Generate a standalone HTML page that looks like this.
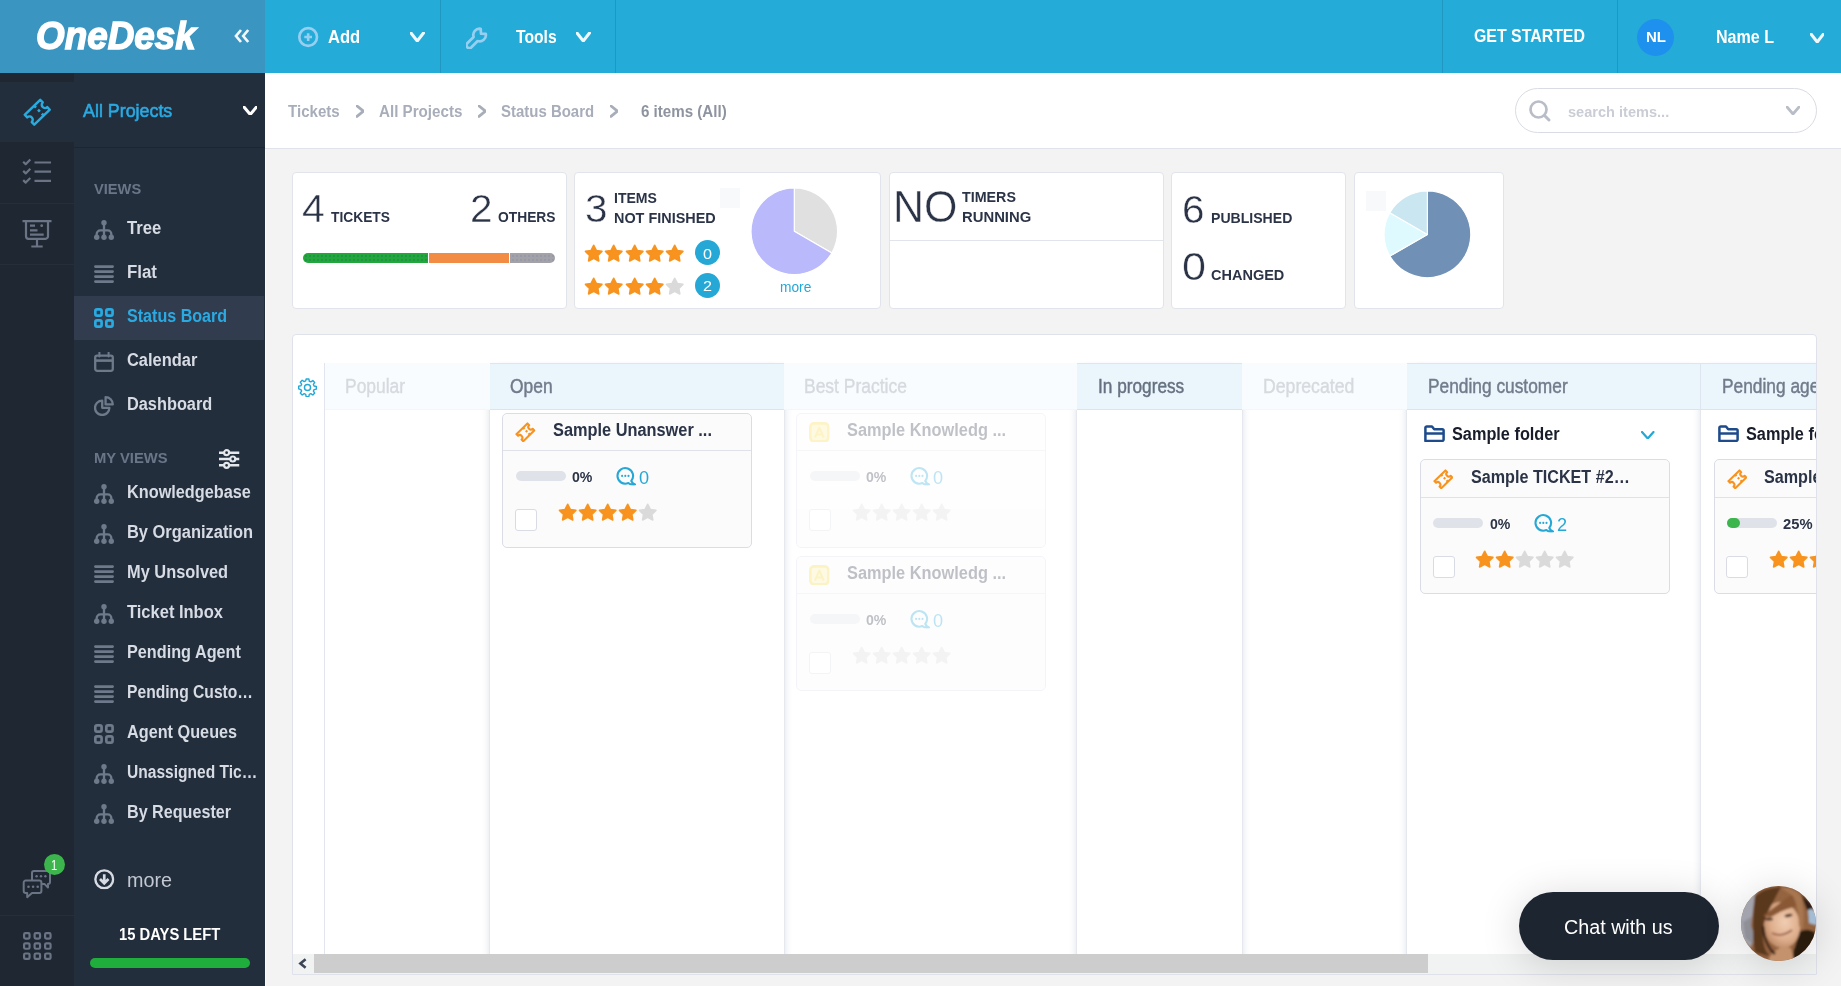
<!DOCTYPE html>
<html><head><meta charset="utf-8"><title>OneDesk</title>
<style>
*{box-sizing:border-box;margin:0;padding:0}
html,body{width:1841px;height:986px;overflow:hidden;background:#f3f3f3;font-family:"Liberation Sans",sans-serif}
.a{position:absolute}
.t{position:absolute;white-space:nowrap;transform-origin:0 0}
.card{position:absolute;background:#fff;border:1px solid #e2e4ec;border-radius:4px}
</style></head><body>

<svg width="0" height="0" style="position:absolute"><defs>
<symbol id="i-ticket" viewBox="-15 -15 30 30"><g transform="rotate(-44)" fill="none" stroke="currentColor" stroke-width="2.4" stroke-linejoin="round"><path d="M-10.6 -6.8H10.6V-3.2A3.2 3.2 0 0 0 10.6 3.2V6.8H-10.6V3.2A3.2 3.2 0 0 0 -10.6 -3.2Z"/><path d="M2.300 -6.800V-4.200M2.300 4.200V6.800M2.300 -1.300V1.300" stroke-width="2.600"/></g></symbol>
<symbol id="i-ticket-s" viewBox="-14.300 -14.300 28.600 28.600"><g transform="rotate(-44)" fill="none" stroke="currentColor" stroke-width="2.900" stroke-linejoin="round"><path d="M-10.600 -6.800H10.600V-3.500A3.500 3.500 0 0 0 10.600 3.500V6.800H-10.600V3.500A3.500 3.500 0 0 0 -10.600 -3.500Z"/><path d="M2.300 -6.800V-4M2.300 4V6.800M2.300 -1.400V1.400" stroke-width="3"/></g></symbol>
<symbol id="i-tree" viewBox="0 0 20 20"><g fill="currentColor"><circle cx="10" cy="2.7" r="2.7"/><circle cx="2.7" cy="17.3" r="2.7"/><circle cx="10" cy="17.3" r="2.7"/><circle cx="17.3" cy="17.3" r="2.7"/></g><path d="M10 3V17M2.7 16V14A3.6 3.6 0 0 1 6.3 10.400H13.700A3.6 3.6 0 0 1 17.3 14V16" fill="none" stroke="currentColor" stroke-width="2.300"/></symbol>
<symbol id="i-flat" viewBox="0 0 20 20"><path d="M1.4 2.6H18.6M1.4 7.6H18.6M1.4 12.6H18.6M1.4 17.6H18.6" stroke="currentColor" stroke-width="2.7" stroke-linecap="round"/></symbol>
<symbol id="i-grid" viewBox="0 0 20.200 20"><g fill="none" stroke="currentColor" stroke-width="2.700"><rect x="1.350" y="1.350" width="6.300" height="6.300" rx="1.700"/><rect x="12.450" y="1.350" width="6.300" height="6.300" rx="1.700"/><rect x="1.350" y="12.350" width="6.300" height="6.300" rx="1.700"/><rect x="12.450" y="12.350" width="6.300" height="6.300" rx="1.700"/></g></symbol>
<symbol id="i-cal" viewBox="0 0 20 20"><g fill="none" stroke="currentColor" stroke-width="2.300"><rect x="1.200" y="3.600" width="17.600" height="15.200" rx="2"/><path d="M1.200 8.600H18.800" stroke-width="2.600"/><path d="M5.400 0.300V4.600M14.600 0.300V4.600" stroke-linecap="round" stroke-width="2"/></g></symbol>
<symbol id="i-dash" viewBox="0 0 20 20"><g fill="none" stroke="currentColor" stroke-width="2.300" stroke-linejoin="round"><path d="M8.200 4.600A7.200 7.200 0 1 0 15.400 11.800H8.200Z"/><path d="M11.600 1.200V8.400H18.800A7.200 7.200 0 0 0 11.600 1.200Z"/></g></symbol>
<symbol id="i-sliders" viewBox="0 0 20.500 20"><g fill="none" stroke="currentColor" stroke-width="2.500"><path d="M0 3.700H20.500M0 10H20.500M0 16.300H20.500"/><circle cx="7.600" cy="3.700" r="2.500" fill="#232e3d" stroke-width="2.200"/><circle cx="13.800" cy="10" r="2.500" fill="#232e3d" stroke-width="2.200"/><circle cx="7.600" cy="16.300" r="2.500" fill="#232e3d" stroke-width="2.200"/></g></symbol>
<symbol id="i-down" viewBox="0 0 20.500 20.500"><g fill="none" stroke="currentColor" stroke-width="2.400"><circle cx="10.250" cy="10.250" r="8.900"/><path d="M10.250 5.200V14M6 10L10.250 14.300L14.500 10" stroke-width="2.700"/></g></symbol>
<symbol id="i-star" viewBox="0 0 20 19"><path d="M10.00 1.40L12.65 6.66L18.46 7.55L14.28 11.69L15.23 17.50L10.00 14.80L4.77 17.50L5.72 11.69L1.54 7.55L7.35 6.66Z" fill="currentColor" stroke="currentColor" stroke-width="1.700" stroke-linejoin="round"/></symbol>
<symbol id="i-chat" viewBox="0 0 20 18.500"><path d="M15.270 13.910A7.800 7.800 0 1 0 12.350 16.080C14 17.600 16.500 17.900 19 17.400C17.200 16.700 15.800 15.600 15.270 13.910Z" fill="none" stroke="currentColor" stroke-width="2.100" stroke-linejoin="round"/><g fill="currentColor"><circle cx="6.100" cy="8.900" r="1.050"/><circle cx="9.300" cy="8.900" r="1.050"/><circle cx="12.500" cy="8.900" r="1.050"/></g></symbol>
<symbol id="i-folder" viewBox="0 0 21 17.500"><g fill="none" stroke="currentColor" stroke-width="2.500" stroke-linejoin="round"><path d="M1.400 15.900V2.800A1.400 1.400 0 0 1 2.800 1.400H8L10.200 4.200H18.200A1.400 1.400 0 0 1 19.600 5.600V14.500A1.400 1.400 0 0 1 18.200 15.900Z"/><path d="M1.400 8.600H19.600"/></g></symbol>
<symbol id="i-gear" viewBox="0 0 20 20"><g fill="none" stroke="currentColor" stroke-width="1.5" stroke-linejoin="round"><circle cx="10" cy="10" r="3.2"/><path d="M8.6 1h2.8l.5 2.4 1.6.7 2.1-1.4 2 2-1.4 2.1.7 1.6 2.4.5v2.8l-2.4.5-.7 1.6 1.4 2.1-2 2-2.1-1.4-1.6.7-.5 2.4H8.6l-.5-2.4-1.6-.7-2.1 1.4-2-2 1.4-2.1-.7-1.6L.7 11.400V8.6l2.400-.5.7-1.6L2.400 4.400l2-2 2.100 1.400 1.600-.7z"/></g></symbol>
<symbol id="i-kb" viewBox="0 0 20 20"><g stroke="currentColor" stroke-linejoin="round"><rect x="1.300" y="1.300" width="17.400" height="17.400" rx="3.600" fill="#fbeea0" stroke-width="2.500"/><path d="M5.800 15L10 5.400L14.200 15M7.200 12H12.800" fill="none" stroke-width="2"/></g></symbol>
</defs></svg>
<div class="a" style="left:0px;top:0px;width:1841px;height:73px;background:#24abd8;"></div>
<div class="a" style="left:0px;top:0px;width:265px;height:73px;background:#3a95c0;"></div>
<div class="t" style="left:35.7px;top:13px;font-size:39.5px;line-height:44px;color:#fff;font-weight:bold;font-style:italic;transform:scaleX(0.9331);-webkit-text-stroke:1.5px #fff;">OneDesk</div>
<svg class="a" style="left:234px;top:29px" width="16" height="14" viewBox="0 0 16 14"><path d="M7 1L2 7l5 6M14.200 1L9.200 7l5 6" fill="none" stroke="#f2f8fc" stroke-width="2.700"/></svg>
<div class="a" style="left:440px;top:0px;width:1px;height:73px;background:#2097c2;"></div>
<div class="a" style="left:615px;top:0px;width:1px;height:73px;background:#2097c2;"></div>
<div class="a" style="left:1442px;top:0px;width:1px;height:73px;background:#2097c2;"></div>
<div class="a" style="left:1617px;top:0px;width:1px;height:73px;background:#2097c2;"></div>
<svg class="a" style="left:297px;top:26px" width="22" height="22" viewBox="0 0 22 22"><circle cx="11.150" cy="11.050" r="8.850" fill="none" stroke="#97cff0" stroke-width="2.700"/><path d="M11.150 7.200V14.900M7.300 11.050H15" stroke="#97cff0" stroke-width="2.600"/></svg>
<div class="t" style="left:328.3px;top:26px;font-size:19px;line-height:21px;color:#fff;font-weight:bold;transform:scaleX(0.8718);">Add</div>
<svg class="a" style="left:410px;top:32px" width="14.5" height="10"><path d="M1 1L7.25 9L13.5 1" fill="none" stroke="#f1f8fc" stroke-width="3" stroke-linecap="round" stroke-linejoin="round"/></svg>
<svg class="a" style="left:466.300px;top:26.500px" width="22" height="22" viewBox="0 0 22 22"><path d="M19.800 6.900L15 6.600L14.700 1.800A6.300 6.300 0 0 0 7.600 9.950L1.300 16.200A2.900 2.900 0 0 0 5.400 20.300L11.650 14A6.300 6.300 0 0 0 19.800 6.900Z" fill="none" stroke="#97cff0" stroke-width="2.700" stroke-linejoin="round"/></svg>
<div class="t" style="left:516.2px;top:26px;font-size:19px;line-height:21px;color:#fff;font-weight:bold;transform:scaleX(0.8243);">Tools</div>
<svg class="a" style="left:576px;top:32px" width="14.5" height="10"><path d="M1 1L7.25 9L13.5 1" fill="none" stroke="#f1f8fc" stroke-width="3" stroke-linecap="round" stroke-linejoin="round"/></svg>
<div class="t" style="left:1474.0px;top:26px;font-size:18.2px;line-height:20px;color:#fff;font-weight:bold;transform:scaleX(0.8736);">GET STARTED</div>
<div class="a" style="left:1636.5px;top:18.5px;width:37.5px;height:37.5px;background:#1e90ee;border-radius:50%"></div>
<div class="t" style="left:1645.5px;top:28px;font-size:15.5px;line-height:17px;color:#fff;font-weight:bold;transform:scaleX(0.9679);">NL</div>
<div class="t" style="left:1716.4px;top:26px;font-size:19px;line-height:21px;color:#fff;font-weight:bold;transform:scaleX(0.8465);">Name L</div>
<svg class="a" style="left:1809.5px;top:32.5px" width="14.5" height="10"><path d="M1 1L7.25 9L13.5 1" fill="none" stroke="#f1f8fc" stroke-width="3" stroke-linecap="round" stroke-linejoin="round"/></svg>
<div class="a" style="left:0px;top:73px;width:74px;height:913px;background:#1e2732;"></div>
<div class="a" style="left:74px;top:73px;width:191px;height:913px;background:#232e3d;"></div>
<div class="a" style="left:0px;top:82px;width:74px;height:60px;background:#232e3d;"></div>
<div class="a" style="left:74px;top:147px;width:191px;height:1px;background:#1c2531;"></div>
<svg class="a" style="left:21.5px;top:96.5px;color:#27ace0;" width="30.5" height="30.5"><use href="#i-ticket"/></svg>
<div class="t" style="left:83.3px;top:100px;font-size:19px;line-height:21px;color:#2aaae2;transform:scaleX(0.9397);-webkit-text-stroke:0.6px #2aaae2;">All Projects</div>
<svg class="a" style="left:242.5px;top:105.5px" width="14.5" height="9.5"><path d="M1 1L7.25 8.5L13.5 1" fill="none" stroke="#fff" stroke-width="3" stroke-linecap="round" stroke-linejoin="round"/></svg>
<svg class="a" style="left:21px;top:158px" width="31" height="28" viewBox="0 0 31 28"><g fill="none" stroke="#6a7484" stroke-width="2.200"><path d="M2.200 3.700L4.700 6.200L9.300 1.500M2.200 12.900L4.700 15.400L9.300 10.700M2.200 22.100L4.700 24.600L9.300 19.900" stroke-linejoin="round"/><path d="M13.500 4.500H30M13.500 13.700H30M13.500 22.900H30"/></g></svg>
<div class="a" style="left:0px;top:203px;width:74px;height:1px;background:#252f3c;"></div>
<svg class="a" style="left:22px;top:219px" width="30" height="29" viewBox="0 0 30 29"><g fill="none" stroke="#6a7484" stroke-width="2.200"><path d="M0.500 2.100H29.500M4 2.100V17.300A2.500 2.500 0 0 0 6.500 19.800H23.500A2.500 2.500 0 0 0 26 17.300V2.100M15 19.800V27.500M9.300 27.500H20.700M8 6.700H13M8 11.300H15.500M8 15.700H21.700"/></g><circle cx="19.700" cy="6.700" r="1.400" fill="#6a7484"/></svg>
<div class="a" style="left:0px;top:264px;width:74px;height:1px;background:#252f3c;"></div>
<div class="t" style="left:94.3px;top:180px;font-size:15.2px;line-height:17px;color:#6a7688;font-weight:bold;transform:scaleX(0.9635);">VIEWS</div>
<div class="a" style="left:74px;top:296px;width:190px;height:44px;background:#323c4f;"></div>
<svg class="a" style="left:94px;top:220px;color:#6e798a;" width="20" height="20"><use href="#i-tree"/></svg>
<div class="t" style="left:127.0px;top:217px;font-size:18.7px;line-height:21px;color:#d7dbe3;font-weight:bold;transform:scaleX(0.8916);">Tree</div>
<svg class="a" style="left:94px;top:264px;color:#6e798a;" width="20" height="20"><use href="#i-flat"/></svg>
<div class="t" style="left:127.0px;top:261px;font-size:18.7px;line-height:21px;color:#d7dbe3;font-weight:bold;transform:scaleX(0.9024);">Flat</div>
<svg class="a" style="left:94px;top:308px;color:#29abe2;" width="20" height="20"><use href="#i-grid"/></svg>
<div class="t" style="left:127.0px;top:305px;font-size:18.7px;line-height:21px;color:#2aaae2;font-weight:bold;transform:scaleX(0.8610);">Status Board</div>
<svg class="a" style="left:94px;top:352px;color:#6e798a;" width="20" height="20"><use href="#i-cal"/></svg>
<div class="t" style="left:127.0px;top:349px;font-size:18.7px;line-height:21px;color:#d7dbe3;font-weight:bold;transform:scaleX(0.8797);">Calendar</div>
<svg class="a" style="left:94px;top:396px;color:#6e798a;" width="20" height="20"><use href="#i-dash"/></svg>
<div class="t" style="left:127.0px;top:393px;font-size:18.7px;line-height:21px;color:#d7dbe3;font-weight:bold;transform:scaleX(0.8733);">Dashboard</div>
<div class="t" style="left:94.3px;top:449px;font-size:15.2px;line-height:17px;color:#6a7688;font-weight:bold;transform:scaleX(0.9731);">MY VIEWS</div>
<svg class="a" style="left:219px;top:449.2px;color:#e4e7ec;" width="20.5" height="20"><use href="#i-sliders"/></svg>
<svg class="a" style="left:94px;top:484px;color:#6e798a;" width="20" height="20"><use href="#i-tree"/></svg>
<div class="t" style="left:127.0px;top:481px;font-size:18.7px;line-height:21px;color:#d7dbe3;font-weight:bold;transform:scaleX(0.8710);">Knowledgebase</div>
<svg class="a" style="left:94px;top:524px;color:#6e798a;" width="20" height="20"><use href="#i-tree"/></svg>
<div class="t" style="left:127.0px;top:521px;font-size:18.7px;line-height:21px;color:#d7dbe3;font-weight:bold;transform:scaleX(0.8795);">By Organization</div>
<svg class="a" style="left:94px;top:564px;color:#6e798a;" width="20" height="20"><use href="#i-flat"/></svg>
<div class="t" style="left:127.0px;top:561px;font-size:18.7px;line-height:21px;color:#d7dbe3;font-weight:bold;transform:scaleX(0.8774);">My Unsolved</div>
<svg class="a" style="left:94px;top:604px;color:#6e798a;" width="20" height="20"><use href="#i-tree"/></svg>
<div class="t" style="left:127.0px;top:601px;font-size:18.7px;line-height:21px;color:#d7dbe3;font-weight:bold;transform:scaleX(0.8826);">Ticket Inbox</div>
<svg class="a" style="left:94px;top:644px;color:#6e798a;" width="20" height="20"><use href="#i-flat"/></svg>
<div class="t" style="left:127.0px;top:641px;font-size:18.7px;line-height:21px;color:#d7dbe3;font-weight:bold;transform:scaleX(0.8686);">Pending Agent</div>
<svg class="a" style="left:94px;top:684px;color:#6e798a;" width="20" height="20"><use href="#i-flat"/></svg>
<div class="t" style="left:127.0px;top:681px;font-size:18.7px;line-height:21px;color:#d7dbe3;font-weight:bold;transform:scaleX(0.8371);">Pending Custo…</div>
<svg class="a" style="left:94px;top:724px;color:#6e798a;" width="20" height="20"><use href="#i-grid"/></svg>
<div class="t" style="left:127.0px;top:721px;font-size:18.7px;line-height:21px;color:#d7dbe3;font-weight:bold;transform:scaleX(0.8693);">Agent Queues</div>
<svg class="a" style="left:94px;top:764px;color:#6e798a;" width="20" height="20"><use href="#i-tree"/></svg>
<div class="t" style="left:127.0px;top:761px;font-size:18.7px;line-height:21px;color:#d7dbe3;font-weight:bold;transform:scaleX(0.8322);">Unassigned Tic…</div>
<svg class="a" style="left:94px;top:804px;color:#6e798a;" width="20" height="20"><use href="#i-tree"/></svg>
<div class="t" style="left:127.0px;top:801px;font-size:18.7px;line-height:21px;color:#d7dbe3;font-weight:bold;transform:scaleX(0.8635);">By Requester</div>
<svg class="a" style="left:94px;top:869px;color:#d7dbe3;" width="20.5" height="20.5"><use href="#i-down"/></svg>
<div class="t" style="left:127.0px;top:868px;font-size:20.5px;line-height:23px;color:#c3c8d2;transform:scaleX(0.9635);">more</div>
<div class="t" style="left:119.0px;top:925px;font-size:16.8px;line-height:19px;color:#fff;font-weight:bold;transform:scaleX(0.8806);">15 DAYS LEFT</div>
<div class="a" style="left:90px;top:958px;width:160px;height:10px;background:#1fad3c;border-radius:5px"></div>
<svg class="a" style="left:22px;top:869px" width="30" height="30" viewBox="0 0 30 30"><g fill="#1e2732" stroke="#6a7484" stroke-width="2" stroke-linejoin="round"><path d="M12 1.900H26A2 2 0 0 1 28 3.900V12.900A2 2 0 0 1 26 14.900V18.600L22.400 14.900H12A2 2 0 0 1 10 12.900V3.900A2 2 0 0 1 12 1.900Z"/><path d="M3.700 11.500H17.400A2 2 0 0 1 19.400 13.500V22A2 2 0 0 1 17.400 24H10L5.200 28.200V24H3.700A2 2 0 0 1 1.700 22V13.500A2 2 0 0 1 3.700 11.500Z"/></g><g fill="#6a7484"><circle cx="6.500" cy="17.800" r="1.300"/><circle cx="11.100" cy="17.800" r="1.300"/><circle cx="15.700" cy="17.800" r="1.300"/><circle cx="14.600" cy="7.200" r="1.200"/><circle cx="19" cy="7.200" r="1.200"/><circle cx="23.400" cy="7.200" r="1.200"/></g></svg>
<div class="a" style="left:44px;top:853.8px;width:21.1px;height:21.1px;background:#3cb64c;border-radius:50%"></div>
<div class="t" style="left:51.4px;top:856px;font-size:15px;line-height:17px;color:#fff;transform:scaleX(0.7432);">1</div>
<div class="a" style="left:0px;top:915px;width:74px;height:1px;background:#252f3c;"></div>
<svg class="a" style="left:22.500px;top:932px" width="29" height="29" viewBox="0 0 29 29"><g fill="none" stroke="#6a7484" stroke-width="2.200"><rect x="1.10" y="1.10" width="5.450" height="5.450" rx="1.300"/><rect x="11.60" y="1.10" width="5.450" height="5.450" rx="1.300"/><rect x="22.10" y="1.10" width="5.450" height="5.450" rx="1.300"/><rect x="1.10" y="11.30" width="5.450" height="5.450" rx="1.300"/><rect x="11.60" y="11.30" width="5.450" height="5.450" rx="1.300"/><rect x="22.10" y="11.30" width="5.450" height="5.450" rx="1.300"/><rect x="1.10" y="21.50" width="5.450" height="5.450" rx="1.300"/><rect x="11.60" y="21.50" width="5.450" height="5.450" rx="1.300"/><rect x="22.10" y="21.50" width="5.450" height="5.450" rx="1.300"/></g></svg>
<div class="a" style="left:265px;top:73px;width:1576px;height:75px;background:#fff;"></div>
<div class="a" style="left:265px;top:148px;width:1576px;height:1px;background:#e1e3ea;"></div>
<div class="t" style="left:288.0px;top:103px;font-size:16px;line-height:17px;color:#a8adba;font-weight:bold;transform:scaleX(0.9425);">Tickets</div>
<svg class="a" style="left:355.5px;top:105.3px" width="8.5" height="12.4"><path d="M1 1L7.5 6.2L1 11.4" fill="none" stroke="#a8adba" stroke-width="2.8" stroke-linecap="round" stroke-linejoin="round"/></svg>
<div class="t" style="left:379.0px;top:103px;font-size:16px;line-height:17px;color:#a8adba;font-weight:bold;transform:scaleX(0.9474);">All Projects</div>
<svg class="a" style="left:477.5px;top:105.3px" width="8.5" height="12.4"><path d="M1 1L7.5 6.2L1 11.4" fill="none" stroke="#a8adba" stroke-width="2.8" stroke-linecap="round" stroke-linejoin="round"/></svg>
<div class="t" style="left:501.3px;top:103px;font-size:16px;line-height:17px;color:#a8adba;font-weight:bold;transform:scaleX(0.9350);">Status Board</div>
<svg class="a" style="left:609.5px;top:105.3px" width="8.5" height="12.4"><path d="M1 1L7.5 6.2L1 11.4" fill="none" stroke="#a8adba" stroke-width="2.8" stroke-linecap="round" stroke-linejoin="round"/></svg>
<div class="t" style="left:641.0px;top:103px;font-size:16px;line-height:17px;color:#8e93a0;font-weight:bold;transform:scaleX(0.9450);">6 items (All)</div>
<div class="a" style="left:265px;top:149px;width:1px;height:837px;background:#fbfbfb;"></div>
<div class="a" style="left:1515px;top:88px;width:302px;height:45px;background:#fff;border:1px solid #d9dce4;border-radius:23px"></div>
<svg class="a" style="left:1528px;top:99px" width="24" height="24" viewBox="0 0 24 24"><circle cx="10.500" cy="10.500" r="8" fill="none" stroke="#b9bdc8" stroke-width="2.700"/><path d="M16.500 16.500L21 21" stroke="#b9bdc8" stroke-width="3" stroke-linecap="round"/></svg>
<div class="t" style="left:1567.8px;top:103px;font-size:15.5px;line-height:17px;color:#cacdd5;font-weight:bold;transform:scaleX(0.9397);">search items...</div>
<svg class="a" style="left:1785.5px;top:105.5px" width="14" height="9"><path d="M1 1L7.0 8L13 1" fill="none" stroke="#b9bdc8" stroke-width="2.7" stroke-linecap="round" stroke-linejoin="round"/></svg>
<div class="card" style="left:292px;top:172px;width:275px;height:137px"></div>
<div class="card" style="left:574px;top:172px;width:307px;height:137px"></div>
<div class="card" style="left:889px;top:172px;width:275px;height:137px"></div>
<div class="card" style="left:1171px;top:172px;width:175px;height:137px"></div>
<div class="card" style="left:1354px;top:172px;width:150px;height:137px"></div>
<div class="t" style="left:302.0px;top:186px;font-size:39.5px;line-height:44px;color:#2b3347;transform:scaleX(1.0378);-webkit-text-stroke:0.450px #fff;">4</div>
<div class="t" style="left:331.2px;top:209px;font-size:14.7px;line-height:16px;color:#2b3347;font-weight:bold;transform:scaleX(0.9382);">TICKETS</div>
<div class="t" style="left:469.5px;top:186px;font-size:39.5px;line-height:44px;color:#2b3347;transform:scaleX(1.0242);-webkit-text-stroke:0.450px #fff;">2</div>
<div class="t" style="left:497.8px;top:209px;font-size:14.7px;line-height:16px;color:#2b3347;font-weight:bold;transform:scaleX(0.9403);">OTHERS</div>
<div class="a" style="left:303px;top:253px;width:125px;height:10px;background:#21a73a;border-radius:5px 0 0 5px;background-image:radial-gradient(circle,rgba(40,70,140,.45) 0.500px,transparent 0.900px);background-size:4px 4px;background-position:1px 1px"></div>
<div class="a" style="left:429px;top:253px;width:80px;height:10px;background:#f28b44;"></div>
<div class="a" style="left:510px;top:253px;width:45px;height:10px;background:#a2a2a8;border-radius:0 5px 5px 0;background-image:radial-gradient(circle,rgba(90,110,160,.35) 0.500px,transparent 0.900px);background-size:4px 4px;background-position:1px 1px"></div>
<div class="t" style="left:585.0px;top:186px;font-size:39.5px;line-height:44px;color:#2b3347;transform:scaleX(1.0242);-webkit-text-stroke:0.450px #fff;">3</div>
<div class="t" style="left:614.0px;top:190px;font-size:14.7px;line-height:16px;color:#2b3347;font-weight:bold;transform:scaleX(0.9573);">ITEMS</div>
<div class="t" style="left:614.0px;top:210px;font-size:14.7px;line-height:16px;color:#2b3347;font-weight:bold;transform:scaleX(0.9815);">NOT FINISHED</div>
<div class="a" style="left:720px;top:188px;width:20px;height:20px;background:#f8f9fa;"></div>
<svg class="a" style="left:584.4px;top:243.6px;color:#f7931e;" width="19.4" height="18.4"><use href="#i-star"/></svg>
<svg class="a" style="left:604.4px;top:243.6px;color:#f7931e;" width="19.4" height="18.4"><use href="#i-star"/></svg>
<svg class="a" style="left:624.5px;top:243.6px;color:#f7931e;" width="19.4" height="18.4"><use href="#i-star"/></svg>
<svg class="a" style="left:644.5px;top:243.6px;color:#f7931e;" width="19.4" height="18.4"><use href="#i-star"/></svg>
<svg class="a" style="left:664.6px;top:243.6px;color:#f7931e;" width="19.4" height="18.4"><use href="#i-star"/></svg>
<svg class="a" style="left:584.4px;top:277px;color:#f7931e;" width="19.4" height="18.4"><use href="#i-star"/></svg>
<svg class="a" style="left:604.4px;top:277px;color:#f7931e;" width="19.4" height="18.4"><use href="#i-star"/></svg>
<svg class="a" style="left:624.5px;top:277px;color:#f7931e;" width="19.4" height="18.4"><use href="#i-star"/></svg>
<svg class="a" style="left:644.5px;top:277px;color:#f7931e;" width="19.4" height="18.4"><use href="#i-star"/></svg>
<svg class="a" style="left:664.6px;top:277px;color:#dadada;" width="19.4" height="18.4"><use href="#i-star"/></svg>
<div class="a" style="left:695px;top:240px;width:25px;height:25px;background:#25a8d6;border-radius:50%"></div>
<div class="t" style="left:703.0px;top:245px;font-size:15.5px;line-height:17px;color:#fff;transform:scaleX(1.0440);">0</div>
<div class="a" style="left:695px;top:272.7px;width:25px;height:25px;background:#25a8d6;border-radius:50%"></div>
<div class="t" style="left:703.0px;top:277px;font-size:15.5px;line-height:17px;color:#fff;transform:scaleX(1.0440);">2</div>
<svg class="a" style="left:750.2px;top:187.2px" width="88.6" height="88.6" viewBox="-44.3 -44.3 88.6 88.6"><path d="M0 0L0.00 -43.30A43.3 43.3 0 0 1 37.50 21.65Z" fill="#e0e0e0" stroke="#fff" stroke-width="1.200" stroke-linejoin="round"/><path d="M0 0L37.50 21.65A43.3 43.3 0 1 1 -0.00 -43.30Z" fill="#b9b9fb" stroke="#fff" stroke-width="1.200" stroke-linejoin="round"/></svg>
<div class="t" style="left:779.7px;top:279px;font-size:14.5px;line-height:16px;color:#25a8d6;transform:scaleX(0.9475);">more</div>
<div class="t" style="left:892.8px;top:183px;font-size:43.5px;line-height:48px;color:#2b3347;transform:scaleX(0.9885);-webkit-text-stroke:0.450px #fff;">NO</div>
<div class="t" style="left:961.5px;top:189px;font-size:14.7px;line-height:16px;color:#2b3347;font-weight:bold;transform:scaleX(0.9724);">TIMERS</div>
<div class="t" style="left:961.5px;top:209px;font-size:14.7px;line-height:16px;color:#2b3347;font-weight:bold;transform:scaleX(1.0103);">RUNNING</div>
<div class="a" style="left:890px;top:240px;width:273px;height:1px;background:#e2e4ec;"></div>
<div class="t" style="left:1182.0px;top:187px;font-size:39.5px;line-height:44px;color:#2b3347;transform:scaleX(1.0242);-webkit-text-stroke:0.450px #fff;">6</div>
<div class="t" style="left:1210.6px;top:210px;font-size:14.7px;line-height:16px;color:#2b3347;font-weight:bold;transform:scaleX(0.9583);">PUBLISHED</div>
<div class="t" style="left:1182.0px;top:244px;font-size:39.5px;line-height:44px;color:#2b3347;transform:scaleX(1.0925);-webkit-text-stroke:0.450px #fff;">0</div>
<div class="t" style="left:1210.6px;top:267px;font-size:14.7px;line-height:16px;color:#2b3347;font-weight:bold;transform:scaleX(0.9877);">CHANGED</div>
<div class="a" style="left:1365.5px;top:191px;width:20px;height:20px;background:#f8f9fa;"></div>
<svg class="a" style="left:1383.1999999999998px;top:190.2px" width="88.8" height="88.8" viewBox="-44.4 -44.4 88.8 88.8"><path d="M0 0L0.00 -43.40A43.4 43.4 0 1 1 -37.59 21.70Z" fill="#7091b5" stroke="#fff" stroke-width="1.200" stroke-linejoin="round"/><path d="M0 0L-37.59 21.70A43.4 43.4 0 0 1 -37.59 -21.70Z" fill="#dffaff" stroke="#fff" stroke-width="1.200" stroke-linejoin="round"/><path d="M0 0L-37.59 -21.70A43.4 43.4 0 0 1 -0.00 -43.40Z" fill="#cae6f0" stroke="#fff" stroke-width="1.200" stroke-linejoin="round"/></svg>
<div class="a" style="left:292px;top:334px;width:1525px;height:641px;background:#fff;border:1px solid #dfe2ea;border-radius:4px 4px 0 0;overflow:hidden">
<svg class="a" style="left:5px;top:43px;color:#25a8d6;" width="19" height="19"><use href="#i-gear"/></svg>
<div class="a" style="left:31px;top:28px;width:1px;height:600px;background:#e3e5ee;"></div>
<div class="a" style="left:196px;top:28px;width:296px;height:600px;background:#fff;border-left:1px solid #e5e8ef;border-right:1px solid #e5e8ef;box-shadow:-5px 0 6px -4px rgba(60,80,110,.13),5px 0 6px -4px rgba(60,80,110,.13)"></div>
<div class="a" style="left:783px;top:28px;width:167px;height:600px;background:#fff;border-left:1px solid #e5e8ef;border-right:1px solid #e5e8ef;box-shadow:-5px 0 6px -4px rgba(60,80,110,.13),5px 0 6px -4px rgba(60,80,110,.13)"></div>
<div class="a" style="left:1113px;top:28px;width:296px;height:600px;background:#fff;border-left:1px solid #e5e8ef;border-right:1px solid #e5e8ef;box-shadow:-5px 0 6px -4px rgba(60,80,110,.13),5px 0 6px -4px rgba(60,80,110,.13)"></div>
<div class="a" style="left:1407px;top:28px;width:297px;height:600px;background:#fff;border-left:1px solid #e5e8ef;border-right:1px solid #e5e8ef;box-shadow:-5px 0 6px -4px rgba(60,80,110,.13),5px 0 6px -4px rgba(60,80,110,.13)"></div>
<div class="a" style="left:32px;top:28px;width:165px;height:47px;background:#f9fcfe;border-bottom:1px solid #f4f6f9"></div>
<div class="t" style="left:52.3px;top:41px;font-size:19.3px;line-height:21px;color:#d6dadf;transform:scaleX(0.9049);-webkit-text-stroke:0.4px currentColor;">Popular</div>
<div class="a" style="left:197px;top:28px;width:294px;height:47px;background:#eaf6fc;border-top:1px solid #dfe5ee;border-bottom:1px solid #dde4ee"></div>
<div class="t" style="left:217.0px;top:41px;font-size:19.3px;line-height:21px;color:#717b8b;transform:scaleX(0.9022);-webkit-text-stroke:0.45px currentColor;">Open</div>
<div class="a" style="left:491px;top:28px;width:293px;height:47px;background:#f9fcfe;border-bottom:1px solid #f4f6f9"></div>
<div class="t" style="left:510.7px;top:41px;font-size:19.3px;line-height:21px;color:#d6dadf;transform:scaleX(0.9059);-webkit-text-stroke:0.4px currentColor;">Best Practice</div>
<div class="a" style="left:784px;top:28px;width:165px;height:47px;background:#eaf6fc;border-top:1px solid #dfe5ee;border-bottom:1px solid #dde4ee"></div>
<div class="t" style="left:804.7px;top:41px;font-size:19.3px;line-height:21px;color:#667080;transform:scaleX(0.8938);-webkit-text-stroke:0.45px currentColor;">In progress</div>
<div class="a" style="left:949px;top:28px;width:165px;height:47px;background:#f9fcfe;border-bottom:1px solid #f4f6f9"></div>
<div class="t" style="left:969.9px;top:41px;font-size:19.3px;line-height:21px;color:#d6dadf;transform:scaleX(0.9160);-webkit-text-stroke:0.4px currentColor;">Deprecated</div>
<div class="a" style="left:1114px;top:28px;width:294px;height:47px;background:#eaf6fc;border-top:1px solid #dfe5ee;border-bottom:1px solid #dde4ee"></div>
<div class="t" style="left:1134.7px;top:41px;font-size:19.3px;line-height:21px;color:#717b8b;transform:scaleX(0.8987);-webkit-text-stroke:0.45px currentColor;">Pending customer</div>
<div class="a" style="left:1408px;top:28px;width:295px;height:47px;background:#eaf6fc;border-top:1px solid #dfe5ee;border-bottom:1px solid #dde4ee"></div>
<div class="t" style="left:1428.6px;top:41px;font-size:19.3px;line-height:21px;color:#717b8b;transform:scaleX(0.8987);-webkit-text-stroke:0.45px currentColor;">Pending agent</div>
<div class="a" style="left:1407px;top:29px;width:1px;height:45px;background:#dfe5ee;"></div>
<div class="a" style="left:209px;top:78px;width:250px;height:135px;">
<div class="a" style="left:0;top:0;width:250px;height:135px;background:#fbfbfb;border:1px solid #dadde6;border-radius:5px"></div>
<div class="a" style="left:1px;top:37px;width:248px;height:1px;background:#dfe2e9;"></div>
<svg class="a" style="left:13.299999999999955px;top:8.800000000000011px;color:#f7931e;" width="20.7" height="20.7"><use href="#i-ticket-s"/></svg>
<div class="t" style="left:51.0px;top:6px;font-size:18.8px;line-height:21px;color:#2b3347;font-weight:bold;transform:scaleX(0.8701);">Sample Unanswer ...</div>
<div class="a" style="left:13.5px;top:58px;width:50px;height:10px;background:#dfe2e8;border-radius:5px"></div>
<div class="t" style="left:70.0px;top:56px;font-size:14.6px;line-height:16px;color:#2b3347;font-weight:bold;transform:scaleX(0.9668);">0%</div>
<svg class="a" style="left:114.25px;top:54.19999999999999px;color:#25a8d6;" width="20" height="18.5"><use href="#i-chat"/></svg>
<div class="t" style="left:137.4px;top:55px;font-size:17.8px;line-height:20px;color:#25a8d6;transform:scaleX(1.0202);">0</div>
<div class="a" style="left:13px;top:96px;width:22px;height:22px;background:#fff;border:1px solid #d9dce4;border-radius:3px"></div>
<svg class="a" style="left:55.799999999999955px;top:90.19999999999999px;color:#f7931e;" width="19.4" height="18.4"><use href="#i-star"/></svg>
<svg class="a" style="left:75.79999999999995px;top:90.19999999999999px;color:#f7931e;" width="19.4" height="18.4"><use href="#i-star"/></svg>
<svg class="a" style="left:95.79999999999995px;top:90.19999999999999px;color:#f7931e;" width="19.4" height="18.4"><use href="#i-star"/></svg>
<svg class="a" style="left:115.79999999999995px;top:90.19999999999999px;color:#f7931e;" width="19.4" height="18.4"><use href="#i-star"/></svg>
<svg class="a" style="left:135.79999999999995px;top:90.19999999999999px;color:#dadada;" width="19.4" height="18.4"><use href="#i-star"/></svg>
</div>
<div class="a" style="left:503px;top:78px;width:250px;height:135px;opacity:.3;">
<div class="a" style="left:0;top:0;width:250px;height:135px;background:#fbfbfb;border:1px solid #dadde6;border-radius:5px"></div>
<div class="a" style="left:1px;top:37px;width:248px;height:1px;background:#dfe2e9;"></div>
<svg class="a" style="left:13.299999999999955px;top:8.800000000000011px;color:#f7d843;" width="20.7" height="20.7"><use href="#i-kb"/></svg>
<div class="t" style="left:51.0px;top:6px;font-size:18.8px;line-height:21px;color:#2b3347;font-weight:bold;transform:scaleX(0.8709);">Sample Knowledg ...</div>
<div class="a" style="left:13.5px;top:58px;width:50px;height:10px;background:#dfe2e8;border-radius:5px"></div>
<div class="t" style="left:70.0px;top:56px;font-size:14.6px;line-height:16px;color:#2b3347;font-weight:bold;transform:scaleX(0.9668);">0%</div>
<svg class="a" style="left:114.25px;top:54.19999999999999px;color:#25a8d6;" width="20" height="18.5"><use href="#i-chat"/></svg>
<div class="t" style="left:137.4px;top:55px;font-size:17.8px;line-height:20px;color:#25a8d6;transform:scaleX(1.0202);">0</div>
<div class="a" style="left:13px;top:96px;width:22px;height:22px;background:#fff;border:1px solid #d9dce4;border-radius:3px"></div>
<svg class="a" style="left:55.799999999999955px;top:90.19999999999999px;color:#dadada;" width="19.4" height="18.4"><use href="#i-star"/></svg>
<svg class="a" style="left:75.79999999999995px;top:90.19999999999999px;color:#dadada;" width="19.4" height="18.4"><use href="#i-star"/></svg>
<svg class="a" style="left:95.79999999999995px;top:90.19999999999999px;color:#dadada;" width="19.4" height="18.4"><use href="#i-star"/></svg>
<svg class="a" style="left:115.79999999999995px;top:90.19999999999999px;color:#dadada;" width="19.4" height="18.4"><use href="#i-star"/></svg>
<svg class="a" style="left:135.79999999999995px;top:90.19999999999999px;color:#dadada;" width="19.4" height="18.4"><use href="#i-star"/></svg>
</div>
<div class="a" style="left:503px;top:221px;width:250px;height:135px;opacity:.3;">
<div class="a" style="left:0;top:0;width:250px;height:135px;background:#fbfbfb;border:1px solid #dadde6;border-radius:5px"></div>
<div class="a" style="left:1px;top:37px;width:248px;height:1px;background:#dfe2e9;"></div>
<svg class="a" style="left:13.299999999999955px;top:8.799999999999955px;color:#f7d843;" width="20.7" height="20.7"><use href="#i-kb"/></svg>
<div class="t" style="left:51.0px;top:6px;font-size:18.8px;line-height:21px;color:#2b3347;font-weight:bold;transform:scaleX(0.8709);">Sample Knowledg ...</div>
<div class="a" style="left:13.5px;top:58px;width:50px;height:10px;background:#dfe2e8;border-radius:5px"></div>
<div class="t" style="left:70.0px;top:56px;font-size:14.6px;line-height:16px;color:#2b3347;font-weight:bold;transform:scaleX(0.9668);">0%</div>
<svg class="a" style="left:114.25px;top:54.200000000000045px;color:#25a8d6;" width="20" height="18.5"><use href="#i-chat"/></svg>
<div class="t" style="left:137.4px;top:55px;font-size:17.8px;line-height:20px;color:#25a8d6;transform:scaleX(1.0202);">0</div>
<div class="a" style="left:13px;top:96px;width:22px;height:22px;background:#fff;border:1px solid #d9dce4;border-radius:3px"></div>
<svg class="a" style="left:55.799999999999955px;top:90.20000000000005px;color:#dadada;" width="19.4" height="18.4"><use href="#i-star"/></svg>
<svg class="a" style="left:75.79999999999995px;top:90.20000000000005px;color:#dadada;" width="19.4" height="18.4"><use href="#i-star"/></svg>
<svg class="a" style="left:95.79999999999995px;top:90.20000000000005px;color:#dadada;" width="19.4" height="18.4"><use href="#i-star"/></svg>
<svg class="a" style="left:115.79999999999995px;top:90.20000000000005px;color:#dadada;" width="19.4" height="18.4"><use href="#i-star"/></svg>
<svg class="a" style="left:135.79999999999995px;top:90.20000000000005px;color:#dadada;" width="19.4" height="18.4"><use href="#i-star"/></svg>
</div>
<svg class="a" style="left:1131.3px;top:89.80000000000001px;color:#1d4b8b;" width="21" height="17.5"><use href="#i-folder"/></svg>
<div class="t" style="left:1159.2px;top:88px;font-size:18.8px;line-height:21px;color:#181d29;font-weight:bold;transform:scaleX(0.8671);">Sample folder</div>
<svg class="a" style="left:1348px;top:95.5px" width="13.5" height="8.5"><path d="M1 1L6.75 7.5L12.5 1" fill="none" stroke="#25a8d6" stroke-width="2.2" stroke-linecap="round" stroke-linejoin="round"/></svg>
<svg class="a" style="left:1425.3px;top:89.80000000000001px;color:#1d4b8b;" width="21" height="17.5"><use href="#i-folder"/></svg>
<div class="t" style="left:1453.2px;top:88px;font-size:18.8px;line-height:21px;color:#181d29;font-weight:bold;transform:scaleX(0.8671);">Sample folder</div>
<svg class="a" style="left:1642px;top:95.5px" width="13.5" height="8.5"><path d="M1 1L6.75 7.5L12.5 1" fill="none" stroke="#25a8d6" stroke-width="2.2" stroke-linecap="round" stroke-linejoin="round"/></svg>
<div class="a" style="left:1127px;top:124px;width:250px;height:135px;">
<div class="a" style="left:0;top:0;width:250px;height:135px;background:#fbfbfb;border:1px solid #dadde6;border-radius:5px"></div>
<div class="a" style="left:1px;top:38px;width:248px;height:1px;background:#dfe2e9;"></div>
<svg class="a" style="left:12.799999999999955px;top:9.800000000000011px;color:#f7931e;" width="20.7" height="20.7"><use href="#i-ticket-s"/></svg>
<div class="t" style="left:50.5px;top:7px;font-size:18.8px;line-height:21px;color:#2b3347;font-weight:bold;transform:scaleX(0.8598);">Sample TICKET #2…</div>
<div class="a" style="left:13.0px;top:59px;width:50px;height:10px;background:#dfe2e8;border-radius:5px"></div>
<div class="t" style="left:69.5px;top:57px;font-size:14.6px;line-height:16px;color:#2b3347;font-weight:bold;transform:scaleX(0.9668);">0%</div>
<svg class="a" style="left:113.75px;top:55.200000000000045px;color:#25a8d6;" width="20" height="18.5"><use href="#i-chat"/></svg>
<div class="t" style="left:136.9px;top:56px;font-size:17.8px;line-height:20px;color:#25a8d6;transform:scaleX(1.0202);">2</div>
<div class="a" style="left:12.5px;top:97px;width:22px;height:22px;background:#fff;border:1px solid #d9dce4;border-radius:3px"></div>
<svg class="a" style="left:55.299999999999955px;top:91.20000000000005px;color:#f7931e;" width="19.4" height="18.4"><use href="#i-star"/></svg>
<svg class="a" style="left:75.29999999999995px;top:91.20000000000005px;color:#f7931e;" width="19.4" height="18.4"><use href="#i-star"/></svg>
<svg class="a" style="left:95.29999999999995px;top:91.20000000000005px;color:#dadada;" width="19.4" height="18.4"><use href="#i-star"/></svg>
<svg class="a" style="left:115.29999999999995px;top:91.20000000000005px;color:#dadada;" width="19.4" height="18.4"><use href="#i-star"/></svg>
<svg class="a" style="left:135.29999999999995px;top:91.20000000000005px;color:#dadada;" width="19.4" height="18.4"><use href="#i-star"/></svg>
</div>
<div class="a" style="left:1421px;top:124px;width:250px;height:135px;">
<div class="a" style="left:0;top:0;width:250px;height:135px;background:#fbfbfb;border:1px solid #dadde6;border-radius:5px"></div>
<div class="a" style="left:1px;top:38px;width:248px;height:1px;background:#dfe2e9;"></div>
<svg class="a" style="left:12.5px;top:9.800000000000011px;color:#f7931e;" width="20.7" height="20.7"><use href="#i-ticket-s"/></svg>
<div class="t" style="left:50.2px;top:7px;font-size:18.8px;line-height:21px;color:#2b3347;font-weight:bold;transform:scaleX(0.8598);">Sample TICKET #1…</div>
<div class="a" style="left:12.700000000000045px;top:59px;width:50px;height:10px;background:#dfe2e8;border-radius:5px"></div>
<div class="a" style="left:12.700000000000045px;top:59px;width:13px;height:10px;background:#3cb64c;border-radius:5px"></div>
<div class="t" style="left:68.7px;top:57px;font-size:14.6px;line-height:16px;color:#2b3347;font-weight:bold;transform:scaleX(1.0095);">25%</div>
<svg class="a" style="left:113.45000000000005px;top:55.200000000000045px;color:#25a8d6;" width="20" height="18.5"><use href="#i-chat"/></svg>
<div class="t" style="left:136.6px;top:56px;font-size:17.8px;line-height:20px;color:#25a8d6;transform:scaleX(1.0202);">1</div>
<div class="a" style="left:12.200000000000045px;top:97px;width:22px;height:22px;background:#fff;border:1px solid #d9dce4;border-radius:3px"></div>
<svg class="a" style="left:55.0px;top:91.20000000000005px;color:#f7931e;" width="19.4" height="18.4"><use href="#i-star"/></svg>
<svg class="a" style="left:75.0px;top:91.20000000000005px;color:#f7931e;" width="19.4" height="18.4"><use href="#i-star"/></svg>
<svg class="a" style="left:95.0px;top:91.20000000000005px;color:#f7931e;" width="19.4" height="18.4"><use href="#i-star"/></svg>
<svg class="a" style="left:115.0px;top:91.20000000000005px;color:#dadada;" width="19.4" height="18.4"><use href="#i-star"/></svg>
<svg class="a" style="left:135.0px;top:91.20000000000005px;color:#dadada;" width="19.4" height="18.4"><use href="#i-star"/></svg>
</div>
<div class="a" style="left:0px;top:619px;width:1523px;height:20px;background:#f1f2f2;"></div>
<div class="a" style="left:21px;top:619px;width:1114px;height:19px;background:#cdcdcd;"></div>
<svg class="a" style="left:5px;top:622px" width="10" height="13" viewBox="0 0 10 13"><path d="M7.600 2.200L2.400 6.450L7.600 10.700" fill="none" stroke="#3b4556" stroke-width="2.600"/></svg>
</div>
<div class="a" style="left:1519px;top:892px;width:200px;height:68px;background:#1d2531;border-radius:34px;box-shadow:0 5px 40px rgba(0,0,0,.16)"></div>
<div class="t" style="left:1564.0px;top:916px;font-size:20px;line-height:22px;color:#fff;transform:scaleX(0.9859);">Chat with us</div>
<div class="a" style="left:1741px;top:885.700px;width:75px;height:75px;border-radius:50%;box-shadow:0 5px 40px rgba(0,0,0,.16)"></div>
<svg class="a" style="left:1741px;top:885.700px" width="75" height="75" viewBox="0 0 75 75"><defs><clipPath id="avc"><circle cx="37.500" cy="37.500" r="37.500"/></clipPath><filter id="avb" x="-10%" y="-10%" width="120%" height="120%"><feGaussianBlur stdDeviation="1.300"/></filter><radialGradient id="avf" cx="60%" cy="45%" r="65%"><stop offset="0" stop-color="#f0cdb2"/><stop offset="0.600" stop-color="#deae8c"/><stop offset="1" stop-color="#b98360"/></radialGradient></defs>
<g clip-path="url(#avc)"><rect width="75" height="75" fill="#8d5f3f"/><g filter="url(#avb)">
<path d="M-2 10L16 4L14 40L10 62L-2 50Z" fill="#a3a4ad"/>
<path d="M2 36L12 30L12 58L4 52Z" fill="#8f8f98"/>
<path d="M14 8Q30 -4 56 4Q72 14 74 40L60 60L20 66L10 40Z" fill="#94633f"/>
<path d="M67 22L78 26L78 40L68 37Z" fill="#a4bdd4"/>
<path d="M60 8L74 22L66 24Z" fill="#2a1c16"/>
<path d="M58 46Q70 40 76 50L70 72L50 76Z" fill="#2b1a11"/>
<ellipse cx="40.500" cy="39" rx="18.500" ry="23" transform="rotate(-10 40.500 39)" fill="url(#avf)"/>
<path d="M28 72Q36 58 50 62L54 78L26 78Z" fill="#c4926c"/>
<path d="M14 10Q22 2 40 1Q34 12 28 24Q22 34 22 50Q22 62 28 70L14 66Q10 40 14 10Z" fill="#5a371f"/>
<path d="M22 30Q34 20 52 8L58 20Q44 22 30 31Z" fill="#8a5935"/>
<path d="M40 2Q52 0 60 10Q64 24 62 44L58 40Q58 22 52 10Z" fill="#a87751"/>
<ellipse cx="28" cy="33" rx="4" ry="1.500" fill="#4b2f20"/><ellipse cx="47.500" cy="29.500" rx="4" ry="1.500" transform="rotate(-10 47.500 29.500)" fill="#4b2f20"/>
<path d="M31 47Q40 52 51 44" fill="none" stroke="#9b5d4b" stroke-width="1.800"/>
<path d="M22 40Q24 60 34 68" fill="none" stroke="#3a2214" stroke-width="2.500"/>
</g></g></svg>
</body></html>
